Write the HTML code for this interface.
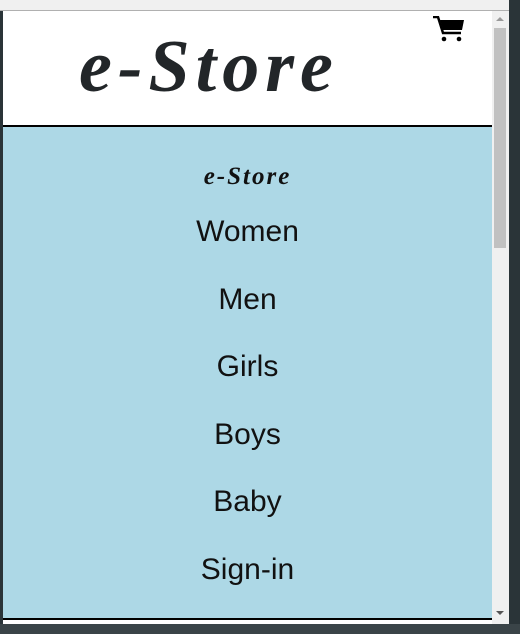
<!DOCTYPE html>
<html><head><style>
body{margin:0;width:520px;height:634px;background:#2a3438;position:relative;overflow:hidden;font-family:"Liberation Sans",sans-serif}
.top{position:absolute;left:0;top:0;width:509px;height:10px;background:#f0f0f0;border-bottom:1px solid #b0b0b0}
.hdr{position:absolute;left:3px;top:11px;width:489px;height:114px;background:#fff;border-bottom:2px solid #000}
.logo{position:absolute;left:76px;top:14px;font:italic bold 74px "Liberation Serif",serif;color:#222629;letter-spacing:6px}
.nav{position:absolute;left:3px;top:127px;width:489px;height:491px;background:#add8e6;border-bottom:2px solid #000}
.foot{position:absolute;left:3px;top:620px;width:489px;height:4px;background:#fff}
.sb{position:absolute;left:492px;top:11px;width:17px;height:613px;background:#f0f0f0}
.thumb{position:absolute;left:2px;top:17px;width:12px;height:220px;background:#c1c1c1}
.item{position:absolute;left:0;width:489px;text-align:center;font-size:30px;color:#111}
.small{position:absolute;left:0;width:489px;text-align:center;top:36px;font:italic bold 25px "Liberation Serif",serif;color:#111;letter-spacing:2px}
.frame{position:absolute;left:0;top:624px;width:520px;height:10px;background:#3a4448}
</style></head><body>
<div class="top"></div>
<div class="hdr"><div class="logo">e-Store</div>
<svg style="position:absolute;left:430px;top:5px" width="32" height="26" viewBox="0 0 32 26"><path d="M0 1h5l5 16h18" stroke="#000" stroke-width="2.5" fill="none"/><path d="M7 4h24l-2 10H10z" fill="#000"/><circle cx="11" cy="23" r="2.3"/><circle cx="26" cy="23" r="2.3"/></svg></div>
<div class="nav">
<div class="small">e-Store</div>
<div class="item" style="top:88px">Women</div>
<div class="item" style="top:156px">Men</div>
<div class="item" style="top:223px">Girls</div>
<div class="item" style="top:291px">Boys</div>
<div class="item" style="top:358px">Baby</div>
<div class="item" style="top:426px">Sign-in</div>
</div>
<div class="foot"></div>
<div class="sb"><div class="thumb"></div>
<div style="position:absolute;left:4px;top:6px;border:4px solid transparent;border-bottom:4px solid #999;border-top:0;width:0"></div>
<div style="position:absolute;left:4px;top:600px;border:4px solid transparent;border-top:4px solid #555;border-bottom:0;width:0"></div></div>
<div class="frame"></div>
</body></html>
